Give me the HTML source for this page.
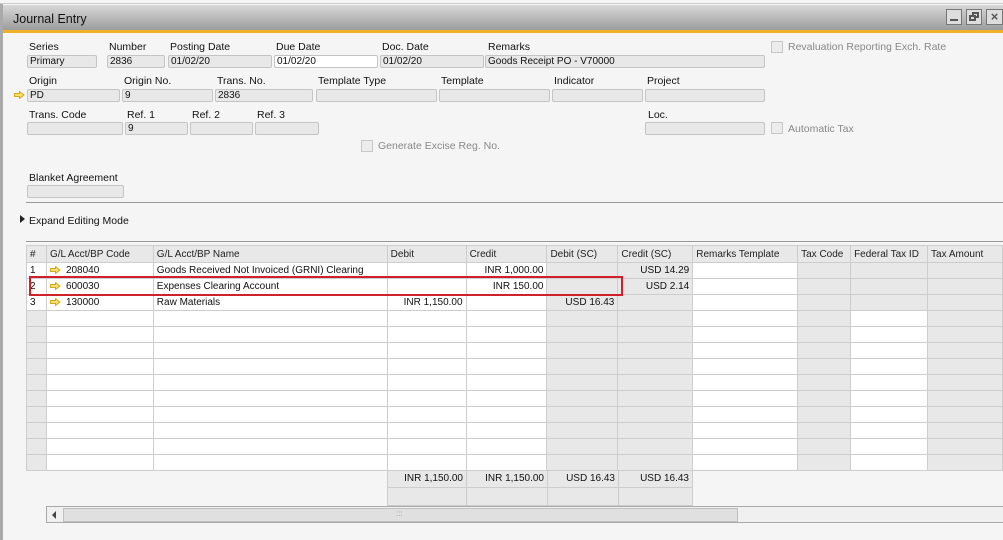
<!DOCTYPE html>
<html><head><meta charset="utf-8"><style>
*{box-sizing:border-box;margin:0;padding:0}
body{width:1003px;height:540px;background:#f5f5f5;font-family:"Liberation Sans","DejaVu Sans",sans-serif;font-size:10.5px;color:#111;position:relative;overflow:hidden}
.a{position:absolute;white-space:nowrap}
.in{position:absolute;height:13px;background:#e8e8e8;border:1px solid #c4c4c4;border-radius:2px;padding-left:2px;line-height:11px;font-size:10px}
.lb{position:absolute;font-size:10.5px;line-height:12px}
.cb{position:absolute;width:12px;height:12px;border:1px solid #c8c8c8;background:#ececec}
.gl{position:absolute;color:#888;font-size:10.5px}
table{position:absolute;left:26px;top:245px;border-collapse:collapse;table-layout:fixed;font-size:10px}
td,th{border:1px solid #cdcdcd;height:16px;padding:0 3px;overflow:hidden;white-space:nowrap;font-weight:normal;text-align:left}
th{height:17px;background:#e8e8e8;color:#222}
.w{background:#fff}.g{background:#e8e8e8}
.r{text-align:right}
.arr{display:inline-block;width:11px;height:8px;vertical-align:-1px;margin-right:5px}
</style></head><body>
<div class="a" style="left:0;top:0;width:1003px;height:4px;background:#f5f5f5;border-bottom:1px solid #ccc"></div>
<div class="a" style="left:0;top:4px;width:3px;height:536px;background:#aaa"></div>
<div class="a" style="left:3px;top:5px;width:1000px;height:26px;background:linear-gradient(#d8d8d8,#9a9a9a)"></div>
<div class="a" style="left:3px;top:30px;width:1000px;height:3px;background:#f0b12a"></div>
<div class="a" style="left:13px;top:12px;font-size:12.5px;color:#111">Journal Entry</div>
<div class="a" style="left:946px;top:9px;width:16px;height:16px;border:1px solid #777;background:#ddd"><div class="a" style="left:3px;top:9px;width:8px;height:2px;background:#555"></div></div>
<div class="a" style="left:966px;top:9px;width:16px;height:16px;border:1px solid #777;background:#ddd"><div class="a" style="left:5px;top:2px;width:7px;height:6px;border:2px solid #555"></div><div class="a" style="left:2px;top:5px;width:7px;height:6px;border:2px solid #555;background:#ddd"></div></div>
<div class="a" style="left:986px;top:9px;width:17px;height:16px;border:1px solid #777;background:#ddd;font-size:13px;color:#555;text-align:center;line-height:14px;font-weight:bold">×</div>

<div class="lb" style="left:29px;top:41px">Series</div>
<div class="lb" style="left:109px;top:41px">Number</div>
<div class="lb" style="left:170px;top:41px">Posting Date</div>
<div class="lb" style="left:276px;top:41px">Due Date</div>
<div class="lb" style="left:382px;top:41px">Doc. Date</div>
<div class="lb" style="left:488px;top:41px">Remarks</div>
<div class="in" style="left:27px;top:55px;width:70px">Primary</div>
<div class="in" style="left:107px;top:55px;width:58px">2836</div>
<div class="in" style="left:168px;top:55px;width:104px">01/02/20</div>
<div class="in" style="left:274px;top:55px;width:104px;background:#fff">01/02/20</div>
<div class="in" style="left:380px;top:55px;width:104px">01/02/20</div>
<div class="in" style="left:485px;top:55px;width:280px">Goods Receipt PO - V70000</div>
<div class="cb" style="left:771px;top:41px"></div><div class="gl" style="left:788px;top:41px">Revaluation Reporting Exch. Rate</div>

<div class="lb" style="left:29px;top:75px">Origin</div>
<div class="lb" style="left:124px;top:75px">Origin No.</div>
<div class="lb" style="left:217px;top:75px">Trans. No.</div>
<div class="lb" style="left:318px;top:75px">Template Type</div>
<div class="lb" style="left:441px;top:75px">Template</div>
<div class="lb" style="left:554px;top:75px">Indicator</div>
<div class="lb" style="left:647px;top:75px">Project</div>
<svg class="a" style="left:14px;top:91px" width="11" height="8"><path d="M0.5 2.5H5.5V0.5L10 4L5.5 7.5V5.5H0.5Z" fill="#f7e070" stroke="#d4a820"/></svg>
<div class="in" style="left:27px;top:89px;width:93px">PD</div>
<div class="in" style="left:122px;top:89px;width:91px">9</div>
<div class="in" style="left:215px;top:89px;width:98px">2836</div>
<div class="in" style="left:316px;top:89px;width:121px"></div>
<div class="in" style="left:439px;top:89px;width:111px"></div>
<div class="in" style="left:552px;top:89px;width:91px"></div>
<div class="in" style="left:645px;top:89px;width:120px"></div>

<div class="lb" style="left:29px;top:109px">Trans. Code</div>
<div class="lb" style="left:127px;top:109px">Ref. 1</div>
<div class="lb" style="left:192px;top:109px">Ref. 2</div>
<div class="lb" style="left:257px;top:109px">Ref. 3</div>
<div class="lb" style="left:648px;top:109px">Loc.</div>
<div class="in" style="left:27px;top:122px;width:96px"></div>
<div class="in" style="left:125px;top:122px;width:63px">9</div>
<div class="in" style="left:190px;top:122px;width:63px"></div>
<div class="in" style="left:255px;top:122px;width:64px"></div>
<div class="in" style="left:645px;top:122px;width:120px"></div>
<div class="cb" style="left:771px;top:122px"></div><div class="gl" style="left:788px;top:123px">Automatic Tax</div>
<div class="cb" style="left:361px;top:140px"></div><div class="gl" style="left:378px;top:140px">Generate Excise Reg. No.</div>

<div class="lb" style="left:29px;top:172px">Blanket Agreement</div>
<div class="in" style="left:27px;top:185px;width:97px"></div>
<div class="a" style="left:26px;top:202px;width:977px;height:1px;background:#999"></div>
<div class="a" style="left:20px;top:215px;width:0;height:0;border-top:4px solid transparent;border-bottom:4px solid transparent;border-left:5px solid #222"></div>
<div class="lb" style="left:29px;top:215px">Expand Editing Mode</div>
<div class="a" style="left:26px;top:241px;width:977px;height:1px;background:#999"></div>

<svg width="0" height="0" style="position:absolute"><symbol id="ar" viewBox="0 0 11 8"><path d="M0.5 2.5H5.5V0.5L10 4L5.5 7.5V5.5H0.5Z" fill="#f7e070" stroke="#d4a820"/></symbol></svg>
<table>
<colgroup><col style="width:20px"><col style="width:107px"><col style="width:234px"><col style="width:79px"><col style="width:81px"><col style="width:71px"><col style="width:75px"><col style="width:105px"><col style="width:53px"><col style="width:77px"><col style="width:75px"></colgroup>
<tr><th>#</th><th>G/L Acct/BP Code</th><th>G/L Acct/BP Name</th><th>Debit</th><th>Credit</th><th>Debit (SC)</th><th>Credit (SC)</th><th>Remarks Template</th><th>Tax Code</th><th>Federal Tax ID</th><th>Tax Amount</th></tr>
<tr class="w"><td>1</td><td><svg class="arr"><use href="#ar"/></svg>208040</td><td>Goods Received Not Invoiced (GRNI) Clearing</td><td></td><td class="r">INR 1,000.00</td><td class="g"></td><td class="g r">USD 14.29</td><td></td><td class="g"></td><td class="g"></td><td class="g"></td></tr>
<tr class="w"><td>2</td><td><svg class="arr"><use href="#ar"/></svg>600030</td><td>Expenses Clearing Account</td><td></td><td class="r">INR 150.00</td><td class="g"></td><td class="g r">USD 2.14</td><td></td><td class="g"></td><td class="g"></td><td class="g"></td></tr>
<tr class="w"><td>3</td><td><svg class="arr"><use href="#ar"/></svg>130000</td><td>Raw Materials</td><td class="r">INR 1,150.00</td><td></td><td class="g r">USD 16.43</td><td class="g"></td><td></td><td class="g"></td><td class="g"></td><td class="g"></td></tr>
<tr class="w"><td class="g"></td><td></td><td></td><td></td><td></td><td class="g"></td><td class="g"></td><td></td><td class="g"></td><td></td><td class="g"></td></tr>
<tr class="w"><td class="g"></td><td></td><td></td><td></td><td></td><td class="g"></td><td class="g"></td><td></td><td class="g"></td><td></td><td class="g"></td></tr>
<tr class="w"><td class="g"></td><td></td><td></td><td></td><td></td><td class="g"></td><td class="g"></td><td></td><td class="g"></td><td></td><td class="g"></td></tr>
<tr class="w"><td class="g"></td><td></td><td></td><td></td><td></td><td class="g"></td><td class="g"></td><td></td><td class="g"></td><td></td><td class="g"></td></tr>
<tr class="w"><td class="g"></td><td></td><td></td><td></td><td></td><td class="g"></td><td class="g"></td><td></td><td class="g"></td><td></td><td class="g"></td></tr>
<tr class="w"><td class="g"></td><td></td><td></td><td></td><td></td><td class="g"></td><td class="g"></td><td></td><td class="g"></td><td></td><td class="g"></td></tr>
<tr class="w"><td class="g"></td><td></td><td></td><td></td><td></td><td class="g"></td><td class="g"></td><td></td><td class="g"></td><td></td><td class="g"></td></tr>
<tr class="w"><td class="g"></td><td></td><td></td><td></td><td></td><td class="g"></td><td class="g"></td><td></td><td class="g"></td><td></td><td class="g"></td></tr>
<tr class="w"><td class="g"></td><td></td><td></td><td></td><td></td><td class="g"></td><td class="g"></td><td></td><td class="g"></td><td></td><td class="g"></td></tr>
<tr class="w"><td class="g"></td><td></td><td></td><td></td><td></td><td class="g"></td><td class="g"></td><td></td><td class="g"></td><td></td><td class="g"></td></tr>
</table>
<!-- totals -->
<div class="a" style="left:387px;top:470px;width:306px;height:36px;background:#e8e8e8;border:1px solid #cdcdcd"></div>
<div class="a" style="left:466px;top:470px;width:1px;height:36px;background:#cdcdcd"></div>
<div class="a" style="left:547px;top:470px;width:1px;height:36px;background:#cdcdcd"></div>
<div class="a" style="left:618px;top:470px;width:1px;height:36px;background:#cdcdcd"></div>
<div class="a" style="left:387px;top:487px;width:306px;height:1px;background:#cdcdcd"></div>
<div class="a" style="left:390px;top:473px;width:73px;text-align:right;font-size:10px">INR 1,150.00</div>
<div class="a" style="left:469px;top:473px;width:75px;text-align:right;font-size:10px">INR 1,150.00</div>
<div class="a" style="left:550px;top:473px;width:65px;text-align:right;font-size:10px">USD 16.43</div>
<div class="a" style="left:621px;top:473px;width:68px;text-align:right;font-size:10px">USD 16.43</div>
<!-- scrollbar -->
<div class="a" style="left:46px;top:506px;width:957px;height:1px;background:#aaa"></div>
<div class="a" style="left:46px;top:507px;width:957px;height:16px;background:#f0f0f0;border-bottom:1px solid #aaa;border-left:1px solid #aaa"></div>
<div class="a" style="left:47px;top:507px;width:16px;height:15px;background:#f0f0f0"><div class="a" style="left:5px;top:4px;border-top:4px solid transparent;border-bottom:4px solid transparent;border-right:4px solid #444"></div></div>
<div class="a" style="left:63px;top:508px;width:675px;height:14px;background:#e0e0e0;border:1px solid #c0c0c0"></div>
<div class="a" style="left:396px;top:509px;font-size:8px;color:#999">:::</div>
<!-- red highlight -->
<div class="a" style="left:29px;top:276px;width:594px;height:20px;border:2.5px solid #d0202a"></div>
</body></html>
